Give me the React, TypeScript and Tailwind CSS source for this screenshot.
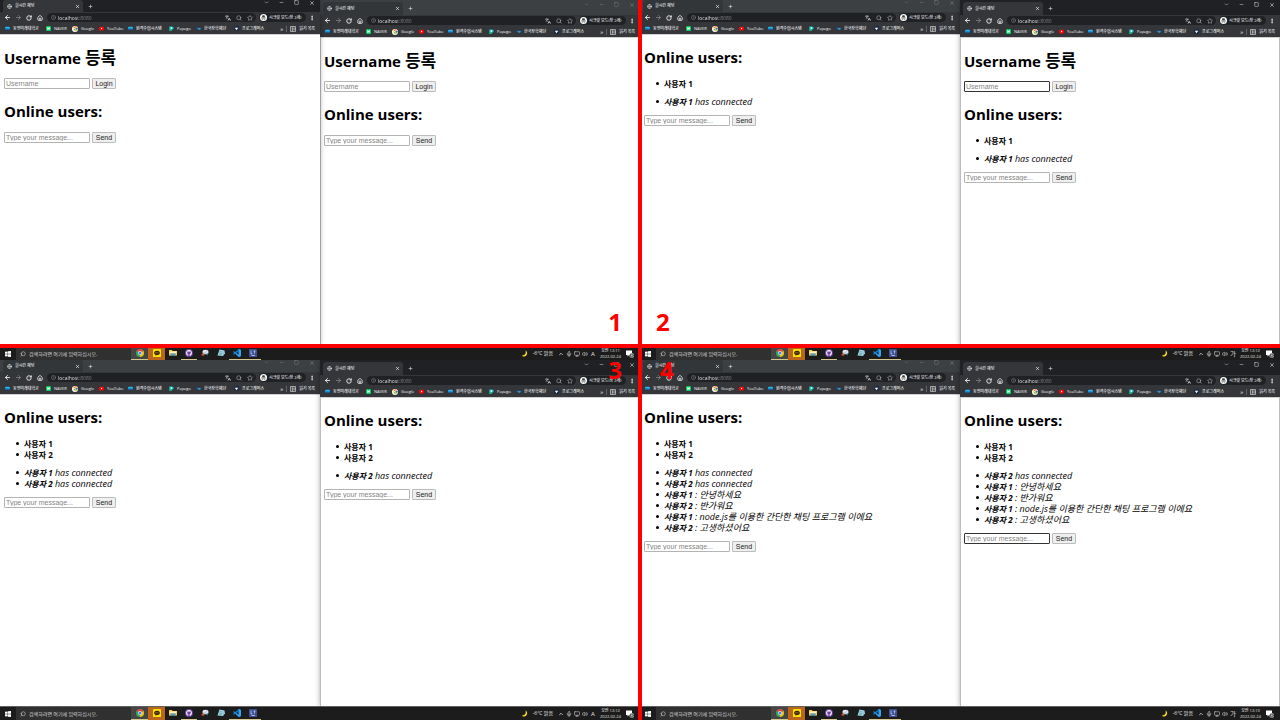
import type { ReactNode } from "react";
import {
  ArrowLeft,
  ArrowRight,
  ChevronDown,
  ChevronUp,
  EllipsisVertical,
  Globe,
  House,
  Info,
  Languages,
  Mic,
  Minus,
  Monitor,
  Plus,
  RotateCw,
  Search,
  Square,
  Star,
  Volume2,
  X,
} from "lucide-react";
import { FcGoogle } from "react-icons/fc";
import { FaGithub } from "react-icons/fa";

type Message = { user: string; text: string };

type ChatProps = {
  login?: boolean;
  users?: string[];
  messages?: Message[];
  focus?: "login" | "message";
};

type BrowserProps = ChatProps & { active?: boolean; right?: boolean };

const CloudMark = () => (
  <svg viewBox="0 0 12 12" className="size-[5px]">
    <path d="M0 5Q0 2 3 2H9Q12 2 12 5V8H0Z" fill="#29b6f6" />
    <path d="M0 6H12Q12 9 8 9H4Q0 9 0 6Z" fill="#0b63b5" />
  </svg>
);

const NaverMark = () => (
  <svg viewBox="0 0 12 12" className="size-[5px]">
    <rect width="12" height="12" rx="1" fill="#03c75a" />
    <path d="M3 3H5.3L7 5.6V3H9V9H6.9L5.1 6.4V9H3Z" fill="#fff" />
  </svg>
);

const GoogleMark = () => (
  <span className="flex size-[6px] items-center justify-center rounded-full bg-white">
    <FcGoogle className="size-[5px]" />
  </span>
);

const YoutubeMark = () => (
  <svg viewBox="0 0 12 12" className="size-[5px]">
    <rect y="1.5" width="12" height="9" rx="2.5" fill="#f00" />
    <path d="M4.6 3.8L8.4 6L4.6 8.2Z" fill="#fff" />
  </svg>
);

const PapagoMark = () => (
  <svg viewBox="0 0 12 12" className="size-[5px]">
    <path d="M1 1H8Q12 2 11 6Q10 9 6 9V12H1Z" fill="#18c5f0" />
    <path d="M1 4H6V12H1Z" fill="#12b76a" />
    <path d="M4 3H7V7H4Z" fill="#fff" />
  </svg>
);

const ScholarMark = () => (
  <svg viewBox="0 0 12 12" className="size-[5px]">
    <path d="M1 4H8V8H3Z" fill="#1976d2" />
    <path d="M6 5H12L10 9H6Z" fill="#26a0da" />
  </svg>
);

const ProgrammersMark = () => (
  <svg viewBox="0 0 12 12" className="size-[5px]">
    <rect width="12" height="12" rx="2" fill="#1c2b45" />
    <path d="M2 4H10L6 10Z" fill="#fff" />
  </svg>
);

const ListMark = () => (
  <svg viewBox="0 0 12 12" className="size-[6px]" fill="none" stroke="#d0d0d0" strokeWidth="1.4">
    <path d="M1 1H11V11H1ZM4.5 1V11M4.5 4.3H11M4.5 7.6H11" />
  </svg>
);

const bookmarks: { label: string; icon: ReactNode; width: string }[] = [
  { label: "동양미래대학교", icon: <CloudMark />, width: "w-[41px]" },
  { label: "NAVER", icon: <NaverMark />, width: "w-[26px]" },
  { label: "Google", icon: <GoogleMark />, width: "w-[27px]" },
  { label: "YouTube", icon: <YoutubeMark />, width: "w-[29px]" },
  { label: "원격수업시스템", icon: <CloudMark />, width: "w-[41px]" },
  { label: "Papago", icon: <PapagoMark />, width: "w-[27px]" },
  { label: "한국장학재단", icon: <ScholarMark />, width: "w-[38px]" },
  { label: "프로그래머스", icon: <ProgrammersMark />, width: "w-[34px]" },
];

function IconButton({ label, className = "", children }: { label: string; className?: string; children: ReactNode }) {
  return (
    <button type="button" aria-label={label} className={`flex items-center justify-center ${className}`}>
      {children}
    </button>
  );
}

function BrowserChrome({ active, right }: { active?: boolean; right?: boolean }) {
  return (
    <header className="shrink-0 bg-[#35363a] text-[4px] leading-none font-medium text-[#f1f3f4]">
      <div className={`flex justify-between ${active ? "bg-[#202124]" : "bg-[#3c4043]"} ${right ? "h-[15px] pt-[2px]" : "h-[12px]"}`}>
        <div className="flex items-center">
          <div className={`ml-[3px] flex h-full w-[80px] items-center rounded-t-[3px] pr-[3px] pl-[4px] ${active ? "bg-[#35363a]" : "bg-[#323639]"}`}>
            <Globe className="size-[5px]" />
            <span className="ml-[3px] grow">실시간 채팅</span>
            <IconButton label="탭 닫기" className="size-[5px]">
              <X className="size-[5px]" strokeWidth={3} />
            </IconButton>
          </div>
          <IconButton label="새 탭" className="ml-[4px] size-[6px]">
            <Plus className="size-[5px]" strokeWidth={2.5} />
          </IconButton>
        </div>
        <div className={`flex h-[5px] items-center gap-[10px] pr-[5px] ${active ? "text-white" : "text-[#85888b]"}`}>
          <IconButton label="탭 검색"><ChevronDown className="size-[5px]" /></IconButton>
          <IconButton label="최소화"><Minus className="size-[5px]" /></IconButton>
          <IconButton label="최대화"><Square className="size-[5px]" /></IconButton>
          <IconButton label="닫기"><X className="size-[6px]" /></IconButton>
        </div>
      </div>
      <div className="flex h-[11px] items-center pr-[5px] pl-[4px]">
        <div className="flex gap-[4px]">
          <IconButton label="뒤로" className="size-[7px]"><ArrowLeft className="size-[7px]" strokeWidth={3} /></IconButton>
          <IconButton label="앞으로" className="size-[7px] text-[#8a8c8f]"><ArrowRight className="size-[7px]" strokeWidth={2.5} /></IconButton>
          <IconButton label="새로고침" className="w-[6px]"><RotateCw className="size-[6px]" strokeWidth={3.5} /></IconButton>
          <IconButton label="홈" className="size-[7px]"><House className="size-[6px]" strokeWidth={3} /></IconButton>
        </div>
        <div className="ml-[4px] flex h-[9px] min-w-0 grow items-center rounded-full bg-[#202124] pr-[3px] pl-[4px]">
          <Info className="size-[5px] text-[#9aa0a6]" />
          <input
            aria-label="주소창"
            defaultValue="localhost:8080"
            className="ml-[2px] h-[8px] min-w-0 grow bg-[linear-gradient(to_right,#f1f3f4_20px,#80868b_20px)] bg-clip-text text-[5px] leading-[8px] text-transparent outline-none"
          />
          <div className="flex gap-[5px] text-[#c4c7c9]">
            <IconButton label="번역"><Languages className="size-[6px]" strokeWidth={2.5} /></IconButton>
            <IconButton label="확대"><Search className="size-[6px]" /></IconButton>
            <IconButton label="북마크 추가"><Star className="size-[6px]" /></IconButton>
          </div>
        </div>
        <button type="button" className="ml-[3px] flex h-[9px] w-[47px] shrink-0 items-center rounded-full bg-[#202124] pl-px whitespace-nowrap">
          <svg viewBox="0 0 16 16" className="size-[7px] shrink-0">
            <circle cx="8" cy="8" r="8" fill="#fff" />
            <path d="M5.6 3H10.4L11.4 7H4.6ZM3 7.2H13V8.4H3Z" fill="#3c4043" />
            <path d="M6.9 10.7H9.1" stroke="#3c4043" />
            <circle cx="5.5" cy="11" r="1.5" fill="none" stroke="#3c4043" />
            <circle cx="10.5" cy="11" r="1.5" fill="none" stroke="#3c4043" />
          </svg>
          <span className="ml-[2px]">시크릿 모드(창 2개)</span>
        </button>
        <IconButton label="메뉴" className="ml-[3px] size-[6px]"><EllipsisVertical className="size-[6px]" strokeWidth={3} /></IconButton>
      </div>
      <nav className="flex h-[11px] items-center pr-[5px] pl-[5px] whitespace-nowrap">
        {bookmarks.map((b) => (
          <a key={b.label} href="#" className={`flex shrink-0 items-center gap-[3px] ${b.width}`}>
            <span className="shrink-0">{b.icon}</span>
            {b.label}
          </a>
        ))}
        <div className="ml-auto flex items-center">
          <button type="button" aria-label="북마크 더보기" className="text-[6px]">»</button>
          <span className="mx-[3px] h-[6px] w-px bg-[#5f6368]" />
          <button type="button" className="flex items-center gap-[3px]">
            <ListMark />
            읽기 목록
          </button>
        </div>
      </nav>
    </header>
  );
}

function Field({ placeholder, action, focused }: { placeholder: string; action: string; focused?: boolean }) {
  return (
    <form className="flex gap-[2px] font-['Liberation_Sans',Arial,sans-serif] text-[7px] leading-[9px]" onSubmit={(e) => e.preventDefault()}>
      <input
        aria-label={placeholder}
        placeholder={placeholder}
        className={`h-[11px] w-[86px] rounded-[1px] border bg-white px-px outline-none placeholder:text-[#858585] ${focused ? "border-[#333]" : "border-[#b4b4b4]"}`}
      />
      <button type="submit" className="h-[11px] w-[24px] rounded-[1px] border border-[#bcbcbc] bg-[#efefef] text-[#222]">
        {action}
      </button>
    </form>
  );
}

const Heading = ({ children }: { children: ReactNode }) => (
  <h1 className="mt-[12px] mb-[10px] h-[21px] text-[15px] leading-[21px] font-bold">{children}</h1>
);

const Item = ({ children }: { children: ReactNode }) => (
  <li className="flex h-[11px] items-center gap-[5px]">
    <span className="size-[3px] shrink-0 rounded-full bg-black" />
    <span className="whitespace-nowrap">{children}</span>
  </li>
);

function Chat({ login, users = [], messages = [], focus, right }: ChatProps & { right?: boolean }) {
  return (
    <main className={`flow-root grow text-[8px] leading-[11px] text-black ${right ? "pl-[3px]" : "pl-[4px]"}`}>
      {login && (
        <>
          <Heading>Username <span className="text-[17px]">등록</span></Heading>
          <Field placeholder="Username" action="Login" focused={focus === "login"} />
        </>
      )}
      <Heading>Online users:</Heading>
      {users.length > 0 && (
        <ul className="mb-[7px] pl-[12px] font-bold">
          {users.map((u) => <Item key={u}>{u}</Item>)}
        </ul>
      )}
      {messages.length > 0 && (
        <ul className="mb-[8px] pl-[12px] text-[9px] italic">
          {messages.map((m, i) => (
            <Item key={i}><b className="text-[8px]">{m.user}</b> {m.text}</Item>
          ))}
        </ul>
      )}
      <Field placeholder="Type your message..." action="Send" focused={focus === "message"} />
    </main>
  );
}

function BrowserWindow({ active, right, ...chat }: BrowserProps) {
  return (
    <section
      className={`flex min-w-0 flex-1 flex-col bg-white ${active ? "z-10 shadow-[0_0_5px_rgba(0,0,0,0.35)]" : ""}`}
    >
      <BrowserChrome active={active} right={right} />
      <div className={`flex grow border-t border-t-[#d0d0d0] ${right ? "border-x border-x-[#bdbdbd]" : ""}`}>
        <Chat right={right} {...chat} />
      </div>
    </section>
  );
}

const apps: { label: string; icon: ReactNode; tile?: string; open?: boolean }[] = [
  {
    label: "Chrome",
    tile: "w-[17px] bg-[#464646]",
    open: true,
    icon: (
      <svg viewBox="0 0 16 16" className="size-[8px]">
        <circle cx="8" cy="8" r="8" fill="#34a853" />
        <path d="M8 8L1.1 4A8 8 0 0 1 14.9 4Z" fill="#ea4335" />
        <path d="M8 8L14.9 4A8 8 0 0 1 8 16Z" fill="#fbbc05" />
        <circle cx="8" cy="8" r="3.8" fill="#fff" />
        <circle cx="8" cy="8" r="3" fill="#4285f4" />
      </svg>
    ),
  },
  {
    label: "KakaoTalk",
    tile: "w-[17px] bg-[#b9651b]",
    icon: (
      <svg viewBox="0 0 16 16" className="size-[8px]">
        <rect width="16" height="16" rx="1" fill="#fae100" />
        <path d="M8 3.5C4.7 3.5 2.3 5.3 2.3 7.8C2.3 9.4 3.4 10.8 5 11.5L4.6 13.5L7 12H8C11.3 12 13.7 10.2 13.7 7.8S11.3 3.5 8 3.5Z" fill="#371d1e" />
        <path d="M4.5 7.8H11.5" stroke="#fae100" strokeWidth="1.2" strokeDasharray="1.4 .6" />
      </svg>
    ),
  },
  {
    label: "파일 탐색기",
    icon: (
      <svg viewBox="0 0 16 16" className="size-[8px]">
        <path d="M0 2H6L7 4H16V13H0Z" fill="#f5c84c" />
        <path d="M1 5H15V8H1Z" fill="#fff0b8" />
        <path d="M3 9H13V14H10.5V12H5.5V14H3Z" fill="#3c9be8" />
      </svg>
    ),
  },
  {
    label: "GitHub Desktop",
    open: true,
    icon: (
      <span className="flex size-[8px] items-center justify-center rounded-full bg-[#6e3fa5] text-white">
        <FaGithub className="size-[6px]" />
      </span>
    ),
  },
  {
    label: "캡처 도구",
    icon: (
      <svg viewBox="0 0 16 16" className="size-[8px]">
        <ellipse cx="9" cy="6" rx="6" ry="4.5" fill="#e6e9ee" />
        <path d="M3 10L12 4M5 13L10 6" stroke="#9aa6b5" strokeWidth="1.2" />
        <path d="M1 10Q4 8 6 11T1 13Z" fill="#e04432" />
        <path d="M10 10L15 8L13 13Z" fill="#3b7fc4" />
      </svg>
    ),
  },
  {
    label: "메모장",
    icon: (
      <svg viewBox="0 0 16 16" className="size-[8px]">
        <path d="M5 1L15 3L12 14L1 13Z" fill="#9ed8e8" />
        <path d="M5 5L12 6M4 8L11 9M4 10.5L10 11.5" stroke="#4c8798" />
        <path d="M12 14L15 3L15.5 9Z" fill="#e5f5f8" />
      </svg>
    ),
  },
  {
    label: "Visual Studio Code",
    open: true,
    icon: (
      <svg viewBox="0 0 16 16" className="size-[8px]">
        <path d="M11.5 0L16 2V14L11.5 16L0 5.8L1.8 4.4L11.5 11.6Z" fill="#1f9cf0" />
        <path d="M11.5 0L0 10.2L1.8 11.6L11.5 4.4Z" fill="#0f7bd0" />
        <path d="M11.5 0L16 2V14L11.5 16Z" fill="#31a8f5" />
      </svg>
    ),
  },
  {
    label: "반디캠",
    open: true,
    icon: (
      <svg viewBox="0 0 16 16" className="size-[8px]">
        <rect width="16" height="16" rx="1" fill="#3c4f94" />
        <path d="M4 3V10H7M9 4H13M11 4V9M5 13H12" stroke="#dfe6ff" strokeWidth="1.3" fill="none" />
      </svg>
    ),
  },
];

function Taskbar({ time, ime }: { time: string; ime: string }) {
  return (
    <footer className="z-20 flex h-[14px] shrink-0 items-stretch border-t border-[#606060] bg-[#1c1c1c] text-[5px] leading-none text-[#e4e4e4]">
      <IconButton label="시작" className="w-[16px] shrink-0">
        <svg viewBox="0 0 12 12" className="size-[6px]" fill="#fff">
          <path d="M0 1.5L5.3 .8V5.6H0ZM6 .7L12 0V5.6H6ZM0 6.3H5.3V11.2L0 10.5ZM6 6.3H12V12L6 11.3Z" />
        </svg>
      </IconButton>
      <div className="flex w-[115px] shrink-0 items-center bg-[#303030] pl-[4px]">
        <Search className="size-[6px] -scale-x-100" />
        <input
          aria-label="검색"
          placeholder="검색하려면 여기에 입력하십시오."
          className="ml-[3px] h-[10px] min-w-0 grow bg-transparent text-[5px] leading-[10px] outline-none placeholder:text-[#d8d8d8]"
        />
      </div>
      <div className="flex">
        {apps.map((a) => (
          <button
            key={a.label}
            type="button"
            aria-label={a.label}
            className={`flex items-center justify-center border-b ${a.tile ?? "w-[16px]"} ${a.open ? "border-[#d5c88e]" : "border-transparent"}`}
          >
            {a.icon}
          </button>
        ))}
      </div>
      <div className="ml-auto flex items-center pr-[6px] whitespace-nowrap">
        <svg viewBox="0 0 16 16" className="size-[7px]">
          <path d="M8 1C14 4 13 14 4 15C2 15 0 14 1 12C7 12 10 7 8 1Z" fill="#ffe01e" />
        </svg>
        <span className="ml-[4px]">-6°C 맑음</span>
        <div className="ml-[5px] flex items-center gap-[2px]">
          <ChevronUp className="size-[6px]" strokeWidth={3} />
          <Mic className="size-[6px]" />
          <Monitor className="size-[6px]" />
          <Volume2 className="size-[6px]" />
        </div>
        <span className="ml-[2px] w-[6px] text-center text-[6px]">{ime}</span>
        <div className="ml-[3px] w-[23px] text-center text-[4px] leading-[6px] font-medium">
          <div>오전 {time}</div>
          <div>2022-02-24</div>
        </div>
        <svg viewBox="0 0 16 16" className="ml-[4px] size-[8px]">
          <path d="M0 1H12V10H6L3 13V10H0Z" fill="#fff" />
          <circle cx="11.5" cy="11" r="4.5" fill="#3a3a3a" stroke="#ddd" />
          <path d="M12 8.5V13.5M12 8.5L9.8 11.8H13.4" stroke="#fff" fill="none" />
        </svg>
      </div>
    </footer>
  );
}

function Desktop({ time, ime, children }: { time: string; ime: string; children: ReactNode }) {
  return (
    <article className="flex min-h-0 min-w-0 flex-col overflow-hidden bg-white">
      <div className="flex min-h-0 grow">{children}</div>
      <Taskbar time={time} ime={ime} />
    </article>
  );
}

const joined = "has connected";
const one = "사용자 1";
const two = "사용자 2";
const talk: Message[] = [
  { user: one, text: ": 안녕하세요" },
  { user: two, text: ": 반가워요" },
  { user: one, text: ": node.js를 이용한 간단한 채팅 프로그램 이에요" },
  { user: two, text: ": 고생하셨어요" },
];

export default function App() {
  return (
    <div className="relative grid min-h-screen grid-cols-2 grid-rows-2 bg-white font-['Open_Sans','Noto_Sans_CJK_KR',sans-serif]">
      <Desktop time="12:11" ime="A">
        <BrowserWindow active login />
        <BrowserWindow right login />
      </Desktop>
      <Desktop time="12:12" ime="가">
        <BrowserWindow users={[one]} messages={[{ user: one, text: joined }]} />
        <BrowserWindow active right login focus="login" users={[one]} messages={[{ user: one, text: joined }]} />
      </Desktop>
      <Desktop time="12:12" ime="A">
        <BrowserWindow users={[one, two]} messages={[{ user: one, text: joined }, { user: two, text: joined }]} />
        <BrowserWindow active right users={[one, two]} messages={[{ user: two, text: joined }]} />
      </Desktop>
      <Desktop time="12:13" ime="가">
        <BrowserWindow users={[one, two]} messages={[{ user: one, text: joined }, { user: two, text: joined }, ...talk]} />
        <BrowserWindow active right focus="message" users={[one, two]} messages={[{ user: two, text: joined }, ...talk]} />
      </Desktop>

      <div className="pointer-events-none absolute inset-0 z-30 grid grid-cols-2 grid-rows-2 text-[24px] leading-[20px] font-bold text-[#ff0000]">
        <span className="self-end justify-self-end pr-[18px] pb-[28px]">1</span>
        <span className="self-end pb-[28px] pl-[16px]">2</span>
        <span className="justify-self-end pr-[18px]">3</span>
        <span className="pl-[20px]">4</span>
        <div className="absolute inset-y-0 left-1/2 w-[4px] -translate-x-1/2 bg-[#ff0000]" />
        <div className="absolute inset-x-0 bottom-1/2 mb-[12px] h-[4px] bg-[#ff0000]" />
      </div>
    </div>
  );
}
